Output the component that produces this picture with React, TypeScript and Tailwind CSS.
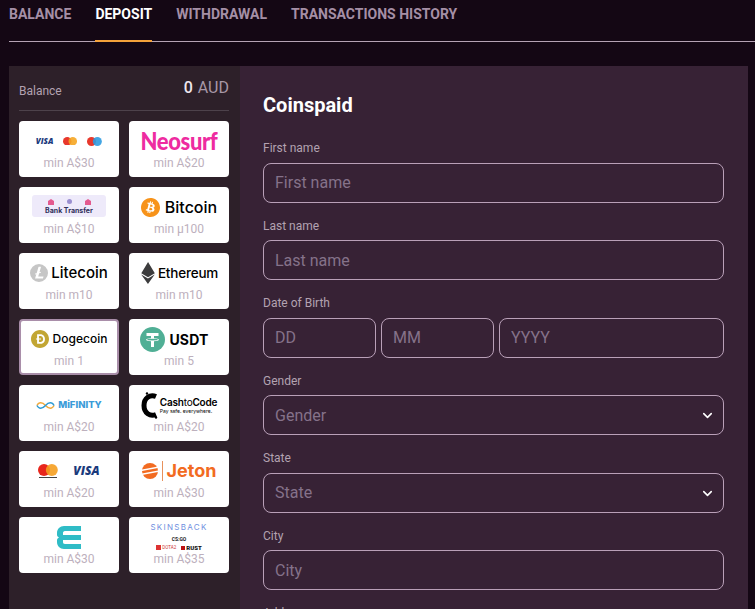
import React from "react";
import { SiBitcoin, SiLitecoin, SiEthereum, SiDogecoin } from "react-icons/si";
import { ChevronDown } from "lucide-react";

const Visa = ({ cls }: { cls: string }) => (
  <span className={`italic font-black text-[#1a3a7c] font-['Open_Sans',sans-serif] ${cls}`}>VISA</span>
);

const Circles = ({ a, b, size }: { a: string; b: string; size: number }) => (
  <svg width={size * 1.65} height={size} viewBox="0 0 33 20">
    <circle cx="10" cy="10" r="10" fill={a} />
    <circle cx="23" cy="10" r="10" fill={b} fillOpacity="0.9" />
  </svg>
);

const Cards = () => (
  <div className="flex items-center gap-[10px]">
    <Visa cls="text-[8px]" />
    <Circles a="#e8382c" b="#f5a623" size={8.5} />
    <Circles a="#e8382c" b="#2f9be0" size={9} />
  </div>
);

const Neosurf = () => (
  <span className="text-[#ee2ba0] text-[22px] leading-none font-black tracking-[-0.4px] font-['Lato',sans-serif] scale-y-110">Neosurf</span>
);

const Bank = () => (
  <div className="w-[74px] h-[22px] -mt-[2px] rounded-[3px] bg-[#eeeafa] flex flex-col items-center justify-center">
    <div className="flex items-center gap-[13px] h-[9px]">
      <svg width="6" height="6" viewBox="0 0 6 6"><path d="M3 0L6 2V6H0V2Z" fill="#e35a8f" /></svg>
      <span className="w-[5px] h-[5px] rounded-full bg-[#9a8fd0]" />
      <svg width="6" height="6" viewBox="0 0 6 6"><path d="M3 0L6 2V6H0V2Z" fill="#e35a8f" /></svg>
    </div>
    <span className="text-[7px] leading-[9px] font-bold text-[#30305a] font-['Inter',sans-serif]">Bank Transfer</span>
  </div>
);

const Coin = ({ icon, text, cls, wrap = "" }: { icon: React.ReactNode; text: string; cls: string; wrap?: string }) => (
  <div className={`flex items-center text-black font-['Inter',sans-serif] ${wrap}`}>
    {icon}
    <span className={cls}>{text}</span>
  </div>
);

const TetherIcon = () => (
  <svg width="25" height="25" viewBox="0 0 25 25" className="mr-[4px]">
    <circle cx="12.500" cy="12.500" r="12.500" fill="#50af95" />
    <path d="M6.500 6H18.500V9H14V11.300C16.800 11.500 19 12 19 12.800S16.800 14.100 14 14.300V20H11V14.300C8.200 14.100 6 13.600 6 12.800S8.200 11.500 11 11.300V9H6.500Z" fill="#fff" />
    <ellipse cx="12.500" cy="12.600" rx="5.300" ry="0.900" fill="#50af95" />
  </svg>
);

const MiFinity = () => (
  <div className="flex items-center gap-[3px]">
    <svg width="19" height="9" viewBox="0 0 21 10" fill="none">
      <path d="M1 5C3 1 7 1 10.500 5S18 9 20 5" stroke="#f2a93b" strokeWidth="1.600" />
      <path d="M1 5C3 9 7 9 10.500 5S18 1 20 5" stroke="#2c9bd6" strokeWidth="1.600" />
    </svg>
    <span className="text-[#3a9bd8] text-[9.500px] font-extrabold font-['Inter',sans-serif]">MiFINITY</span>
  </div>
);

const CashToCode = () => (
  <div className="flex items-center gap-[2px]">
    <svg width="17" height="27" viewBox="0 0 17 27" fill="none">
      <path d="M15 4.500C9 2 3 6 3 13.500S9 25 15 22.500" stroke="#000" strokeWidth="5" />
      <circle cx="6" cy="1.500" r="1.200" fill="#000" />
      <circle cx="15" cy="25.500" r="1.200" fill="#000" />
    </svg>
    <div className="flex flex-col leading-none text-black font-['Inter',sans-serif]">
      <span className="text-[10px] leading-[11px] font-semibold tracking-[-0.2px]">Cash<span className="font-normal">to</span>Code</span>
      <span className="text-[5px] leading-[6px]">Pay safe. everywhere.</span>
    </div>
  </div>
);

const MasterVisa = () => (
  <div className="flex items-center gap-[15px]">
    <div className="flex flex-col items-center">
      <Circles a="#e8261c" b="#f59e20" size={12} />
      <span className="w-[18px] h-[1px] mt-[1px] bg-[#444]" />
    </div>
    <Visa cls="text-[12px]" />
  </div>
);

const Jeton = () => (
  <div className="flex items-center gap-[4px]">
    <svg width="16" height="16" viewBox="0 0 16 16">
      <circle cx="8" cy="8" r="8" fill="#f26b21" />
      <path d="M0 6.500L16 3.500V5L0 8ZM0 10.500L16 7.500V9L0 12Z" fill="#fff" />
    </svg>
    <span className="w-[1px] h-[20px] bg-[#e8915c]" />
    <span className="text-[#f26b21] text-[18px] leading-none font-bold font-['Inter',sans-serif]">Jeton</span>
  </div>
);

const EWallet = () => (
  <svg width="24" height="23" viewBox="0 0 24 23" fill="none">
    <path d="M24 0H7C3 0 0 3 0 7V9C0 10 1 11 2 11.500C1 12 0 13 0 14V16C0 20 3 23 7 23H24V18H8C6.500 18 6 17 6 16V14H24V9H6V7C6 6 6.500 5 8 5H24Z" fill="#2fbcc6" />
  </svg>
);

const Skinsback = () => (
  <div className="flex flex-col items-center -mt-[2px]">
    <span className="text-[#6f8fe0] text-[8px] leading-[10px] tracking-[1.300px] font-['Inter',sans-serif]">SKINSBACK</span>
    <span className="text-[#222] text-[5px] leading-[8px] mt-[3px] font-bold">CS:GO</span>
    <div className="flex items-center gap-[5px] mt-[2px]">
      <span className="flex items-center gap-[1px] text-[#c33] text-[4.500px] leading-[6px]"><span className="w-[5px] h-[5px] bg-[#d33]" />DOTA2</span>
      <span className="flex items-center gap-[1px] text-[#111] text-[6px] leading-[6px] font-black"><span className="w-[4px] h-[4px] bg-[#b11]" />RUST</span>
    </div>
  </div>
);

const methods: { logo: React.ReactNode; min: string; active?: boolean }[] = [
  { logo: <Cards />, min: "min A$30" },
  { logo: <Neosurf />, min: "min A$20" },
  { logo: <Bank />, min: "min A$10" },
  { logo: <Coin icon={<SiBitcoin className="text-[#f7931a] mr-[5px]" size={19} />} text="Bitcoin" cls="text-[16px] font-medium" />, min: "min µ100" },
  { logo: <Coin icon={<SiLitecoin className="text-[#c6c6c6] mr-[3px]" size={18} />} text="Litecoin" cls="text-[15px] font-medium" />, min: "min m10" },
  { logo: <Coin icon={<SiEthereum className="text-[#3c3c3d] -ml-[3px] -mr-[1px]" size={22} />} text="Ethereum" cls="text-[13.500px] font-medium tracking-[-0.2px]" />, min: "min m10" },
  { logo: <Coin icon={<SiDogecoin className="text-[#c2a633] mr-[4px]" size={18} />} text="Dogecoin" cls="text-[12px] font-medium" />, min: "min 1", active: true },
  { logo: <Coin icon={<TetherIcon />} text="USDT" cls="text-[14px] font-bold tracking-[0.2px]" wrap="mr-[9px]" />, min: "min 5" },
  { logo: <MiFinity />, min: "min A$20" },
  { logo: <CashToCode />, min: "min A$20" },
  { logo: <MasterVisa />, min: "min A$20" },
  { logo: <Jeton />, min: "min A$30" },
  { logo: <EWallet />, min: "min A$30" },
  { logo: <Skinsback />, min: "min A$35" },
];

const Field = ({ label, children }: { label: string; children: React.ReactNode }) => (
  <div>
    <div className="text-[12px] leading-[16px] mb-[6.500px] text-[#b3a2b1]">{label}</div>
    {children}
  </div>
);

const Input = ({ placeholder, cls = "w-full" }: { placeholder: string; cls?: string }) => (
  <input
    placeholder={placeholder}
    className={`h-[40px] min-w-0 rounded-[8px] border border-[#b9a0b8] bg-transparent px-[11px] text-[16px] outline-none placeholder:text-[#85728a] ${cls}`}
  />
);

const Select = ({ placeholder }: { placeholder: string }) => (
  <div className="h-[40px] rounded-[8px] border border-[#b9a0b8] pl-[11px] pr-[8px] pt-[0.500px] flex items-center justify-between text-[16px] text-[#85728a]">
    <span>{placeholder}</span>
    <ChevronDown size={15} strokeWidth={2.5} className="text-white" />
  </div>
);

export default function App() {
  return (
    <div className="h-[609px] overflow-hidden bg-[#140714] font-['Roboto',sans-serif]">
      <nav className="ml-[9px] h-[42px] border-b border-[#b5a3b4] flex gap-[24px] text-[14px] font-bold uppercase text-[#a58fa6]">
        <span className="pt-[4px]">Balance</span>
        <span className="pt-[4px] text-white h-[42px] border-b-2 border-[#f4a23b]">Deposit</span>
        <span className="pt-[4px]">Withdrawal</span>
        <span className="pt-[4px]">Transactions History</span>
      </nav>
      <div className="mt-[24px] ml-[9px] w-[739px] flex items-stretch">
        <aside className="w-[231px] shrink-0 bg-[#2d2029] pl-[10px] pr-[11px] pb-[60px]">
          <div className="h-[45px] border-b border-[#4d424b] flex justify-between">
            <span className="text-[12px] leading-[16px] pt-[17px] text-[#b3a2b1]">Balance</span>
            <span className="text-[16px] leading-[20px] pt-[12px] text-[#a797a6]">
              <span className="font-medium text-[#eee6ee] mr-[5px]">0</span>AUD
            </span>
          </div>
          <div className="grid grid-cols-2 gap-[10px] mt-[10px]">
            {methods.map((m, i) => (
              <div
                key={i}
                className={`h-[56px] bg-white rounded-[4px] flex flex-col items-center ${m.active ? "border-2 border-[#a98ea9]" : ""}`}
              >
                <div className={`h-[28px] flex items-center justify-center w-full ${m.active ? "mt-[4px]" : "mt-[6px]"}`}>{m.logo}</div>
                <div className="text-[12px] leading-[16px] text-[#bdb0bd]">{m.min}</div>
              </div>
            ))}
          </div>
        </aside>
        <main className="w-[508px] bg-[#372235] pl-[23px] pt-[28px] text-white">
          <div className="w-[461px]">
            <h1 className="text-[20px] leading-[22px] font-bold mb-[24.250px]">Coinspaid</h1>
            <div className="flex flex-col gap-[15px]">
              <Field label="First name"><Input placeholder="First name" /></Field>
              <Field label="Last name"><Input placeholder="Last name" /></Field>
              <Field label="Date of Birth">
                <div className="flex gap-[5px]">
                  <Input placeholder="DD" cls="w-[113px]" />
                  <Input placeholder="MM" cls="w-[113px]" />
                  <Input placeholder="YYYY" cls="w-[225px]" />
                </div>
              </Field>
              <Field label="Gender"><Select placeholder="Gender" /></Field>
              <Field label="State"><Select placeholder="State" /></Field>
              <Field label="City"><Input placeholder="City" /></Field>
              <Field label="Address"><Input placeholder="Address" /></Field>
            </div>
          </div>
        </main>
      </div>
    </div>
  );
}
